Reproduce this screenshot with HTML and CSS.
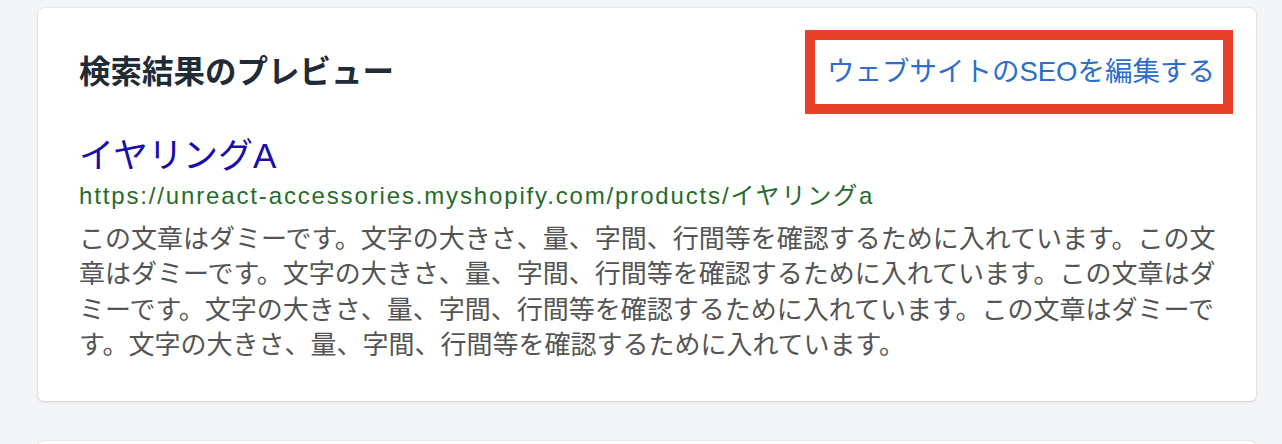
FILE: index.html
```html
<!DOCTYPE html>
<html lang="ja">
<head>
    <meta charset="utf-8">
    <title>検索結果のプレビュー</title>
    <link rel="stylesheet" href="styles.css">
</head>
<body>
    <div class="page">
        <section class="card">
            <div class="card-header">
                <h2 class="card-title">検索結果のプレビュー</h2>
                <a class="edit-link" href="#">ウェブサイトのSEOを編集する</a>
            </div>
            <div class="preview">
                <div class="preview-title">イヤリングA</div>
                <div class="preview-url">https://unreact-accessories.myshopify.com/products/イヤリングa</div>
                <p class="preview-text">この文章はダミーです。文字の大きさ、量、字間、行間等を確認するために入れています。この文章はダミーです。文字の大きさ、量、字間、行間等を確認するために入れています。この文章はダミーです。文字の大きさ、量、字間、行間等を確認するために入れています。この文章はダミーです。文字の大きさ、量、字間、行間等を確認するために入れています。</p>
            </div>
        </section>
        <section class="card card-next"></section>
    </div>
</body>
</html>
```

FILE: styles.css
```css
html, body {
    margin: 0;
    height: 444px;
    overflow: hidden;
}

body {
    font-family: "Liberation Sans", "Noto Sans CJK JP", sans-serif;
    background-color: #f4f5f7;
    color: #212b36;
}

.page {
    padding: 8px 26px 0 38px;
}

.card {
    background: white;
    border-radius: 6px;
    box-shadow: 0 0 0 1px rgba(63, 63, 68, 0.05), 0 1px 3px 0 rgba(63, 63, 68, 0.15);
    padding: 40px 40px 38px 41px;
}

.card-header {
    display: flex;
    justify-content: space-between;
    align-items: center;
    height: 48px;
}

.card-title {
    margin: 0;
    font-size: 31.5px;
    font-weight: bold;
    line-height: 48px;
}

.edit-link {
    color: #2c6ecb;
    text-decoration: none;
    font-size: 27.5px;
    line-height: 64px;
    padding: 0 8px 0 12px;
    border: 10px solid #e8402a;
    margin: -20px -17px -20px 0;
}

.preview {
    margin-top: 38px;
}

.preview-title {
    color: #1a0dab;
    font-size: 35px;
    line-height: 44px;
}

.preview-url {
    margin-top: 3px;
    color: #266b2a;
    font-size: 24px;
    letter-spacing: 1.85px;
    line-height: 30px;
}

.preview-text {
    margin: 11px 0 0;
    color: #545454;
    font-size: 26px;
    line-height: 35.3px;
}

.card-next {
    margin-top: 40px;
    height: 40px;
}
```
